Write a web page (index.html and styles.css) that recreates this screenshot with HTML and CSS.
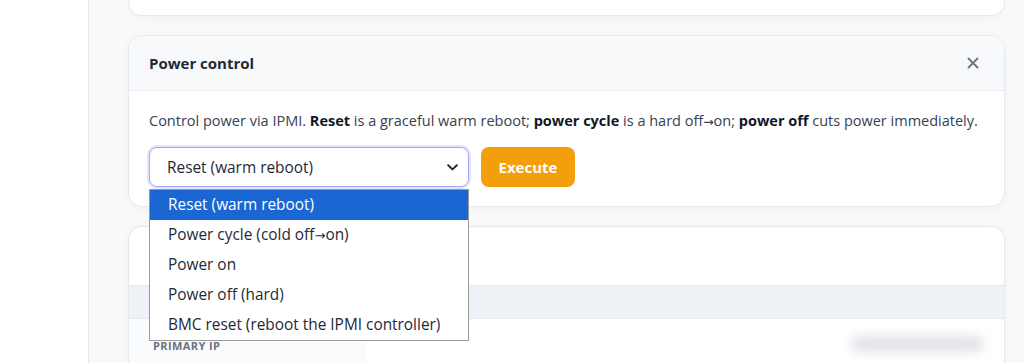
FILE: index.html
```html
<!DOCTYPE html>
<html lang="en">
<head>
<meta charset="utf-8">
<title>Power control</title>
<link rel="stylesheet" href="styles.css">
</head>
<body>
<div class="app">
  <aside class="sidebar"></aside>
  <main class="main">
    <section class="card card-top"></section>

    <section class="card">
      <header class="card-head">
        <h2 class="card-title">Power control</h2>
        <button class="close" aria-label="Close">
          <svg width="12" height="12" viewBox="0 0 12 12"><path d="M1.5 1.5 L10.5 10.5 M10.5 1.5 L1.5 10.5" stroke="#6b7280" stroke-width="1.8" stroke-linecap="round"/></svg>
        </button>
      </header>
      <div class="card-body">
        <p class="desc">Control power via IPMI. <b>Reset</b> is a graceful warm reboot; <b>power cycle</b> is a hard off<span class="arr">→</span>on; <b>power off</b> cuts power immediately.</p>
        <div class="controls">
          <div class="select-wrap">
            <div class="select">
              <span>Reset (warm reboot)</span>
              <svg class="chev" width="11" height="7" viewBox="0 0 11 7"><path d="M1.2 1.2 L5.5 5.4 L9.8 1.2" fill="none" stroke="#1f2937" stroke-width="2" stroke-linecap="round" stroke-linejoin="round"/></svg>
            </div>
            <ul class="dropdown">
              <li class="active">Reset (warm reboot)</li>
              <li>Power cycle (cold off<span class="arr">→</span>on)</li>
              <li>Power on</li>
              <li>Power off (hard)</li>
              <li>BMC reset (reboot the IPMI controller)</li>
            </ul>
          </div>
          <button class="btn-exec">Execute</button>
        </div>
      </div>
    </section>

    <section class="card card-info">
      <div class="info-head"></div>
      <div class="info-band"></div>
      <div class="info-row">
        <div class="info-label">PRIMARY IP</div>
        <div class="info-value"><span class="blur"></span></div>
      </div>
    </section>
  </main>
</div>
</body>
</html>
```

FILE: styles.css
```css
* { box-sizing: border-box; }
html, body { margin: 0; padding: 0; }
body {
  font-family: "Open Sans", "Noto Sans", sans-serif;
  background: #f8f9fa;
  color: #374151;
  overflow: hidden;
  height: 363px;
}
.app { display: flex; height: 363px; }
.sidebar {
  width: 89px;
  flex: none;
  background: #ffffff;
  border-right: 1px solid #e3e5e8;
}
.main {
  flex: 1;
  padding: 0 19px 0 39px;
  display: flex;
  flex-direction: column;
  gap: 19px;
}
.card {
  background: #ffffff;
  border: 1px solid #e6e9ee;
  border-radius: 14px;
  box-shadow: 0 2px 10px rgba(17, 24, 39, 0.04);
}
.card-top {
  height: 16px;
  border-top: none;
  border-radius: 0 0 14px 14px;
  flex: none;
}
.card-head {
  height: 55px;
  display: flex;
  align-items: center;
  justify-content: space-between;
  padding: 0 20px;
  background: #f8f9fb;
  border-bottom: 1px solid #e8ebf0;
  border-radius: 14px 14px 0 0;
}
.card-title {
  margin: 0;
  font-size: 15px;
  font-weight: 700;
  color: #1f2937;
}
.close {
  border: none;
  background: transparent;
  padding: 0;
  margin-right: 4px;
  width: 14px;
  height: 14px;
  display: flex;
  align-items: center;
  justify-content: center;
}
.card-body { padding: 19px 20px 19px; }
.desc {
  margin: 0 0 14px;
  font-size: 14.5px;
  line-height: 21px;
  color: #374151;
}
.desc b { color: #111827; font-weight: 700; }
.arr {
  font-family: "DejaVu Sans", sans-serif;
  font-size: 0.85em;
}
.controls { display: flex; gap: 12px; }
.select-wrap { position: relative; width: 320px; }
.select {
  height: 40px;
  border: 1px solid #a5a8f5;
  box-shadow: 0 0 0 2px rgba(129, 140, 248, 0.22);
  border-radius: 8px;
  display: flex;
  align-items: center;
  justify-content: space-between;
  padding: 0 10px 0 17px;
  font-size: 15.4px;
  color: #1f2937;
  background: #ffffff;
}
.chev { display: block; }
.dropdown {
  position: absolute;
  top: 42px;
  left: 0;
  width: 320px;
  margin: 0;
  padding: 0;
  list-style: none;
  background: #ffffff;
  border: 1px solid #9a9a9a;
  z-index: 5;
  font-size: 15.4px;
  color: #1f2937;
}
.dropdown li {
  height: 30px;
  line-height: 30px;
  padding-left: 18px;
}
.dropdown li.active {
  background: #1a66d2;
  color: #ffffff;
}
.btn-exec {
  height: 40px;
  width: 94px;
  border: none;
  border-radius: 8px;
  background: #f59e0b;
  color: #ffffff;
  font-family: inherit;
  font-size: 15px;
  font-weight: 700;
}
.card-info {
  flex: 1;
  border-bottom: none;
  border-radius: 14px 14px 0 0;
  overflow: hidden;
}
.info-head { height: 58px; }
.info-band {
  height: 34px;
  background: #eef1f5;
  border-top: 1px solid #e6e9ee;
  border-bottom: 1px solid #e6e9ee;
}
.info-row { display: flex; height: 60px; }
.info-label {
  width: 237px;
  background: #fafbfc;
  padding: 19px 0 0 24px;
  font-size: 11px;
  font-weight: 700;
  letter-spacing: 0.4px;
  color: #6b7280;
}
.info-value {
  flex: 1;
  display: flex;
  justify-content: flex-end;
  padding: 16px 20px 0 0;
}
.blur {
  display: block;
  width: 134px;
  height: 18px;
  border-radius: 9px;
  background: #e4e6ea;
  filter: blur(5px);
}
```
